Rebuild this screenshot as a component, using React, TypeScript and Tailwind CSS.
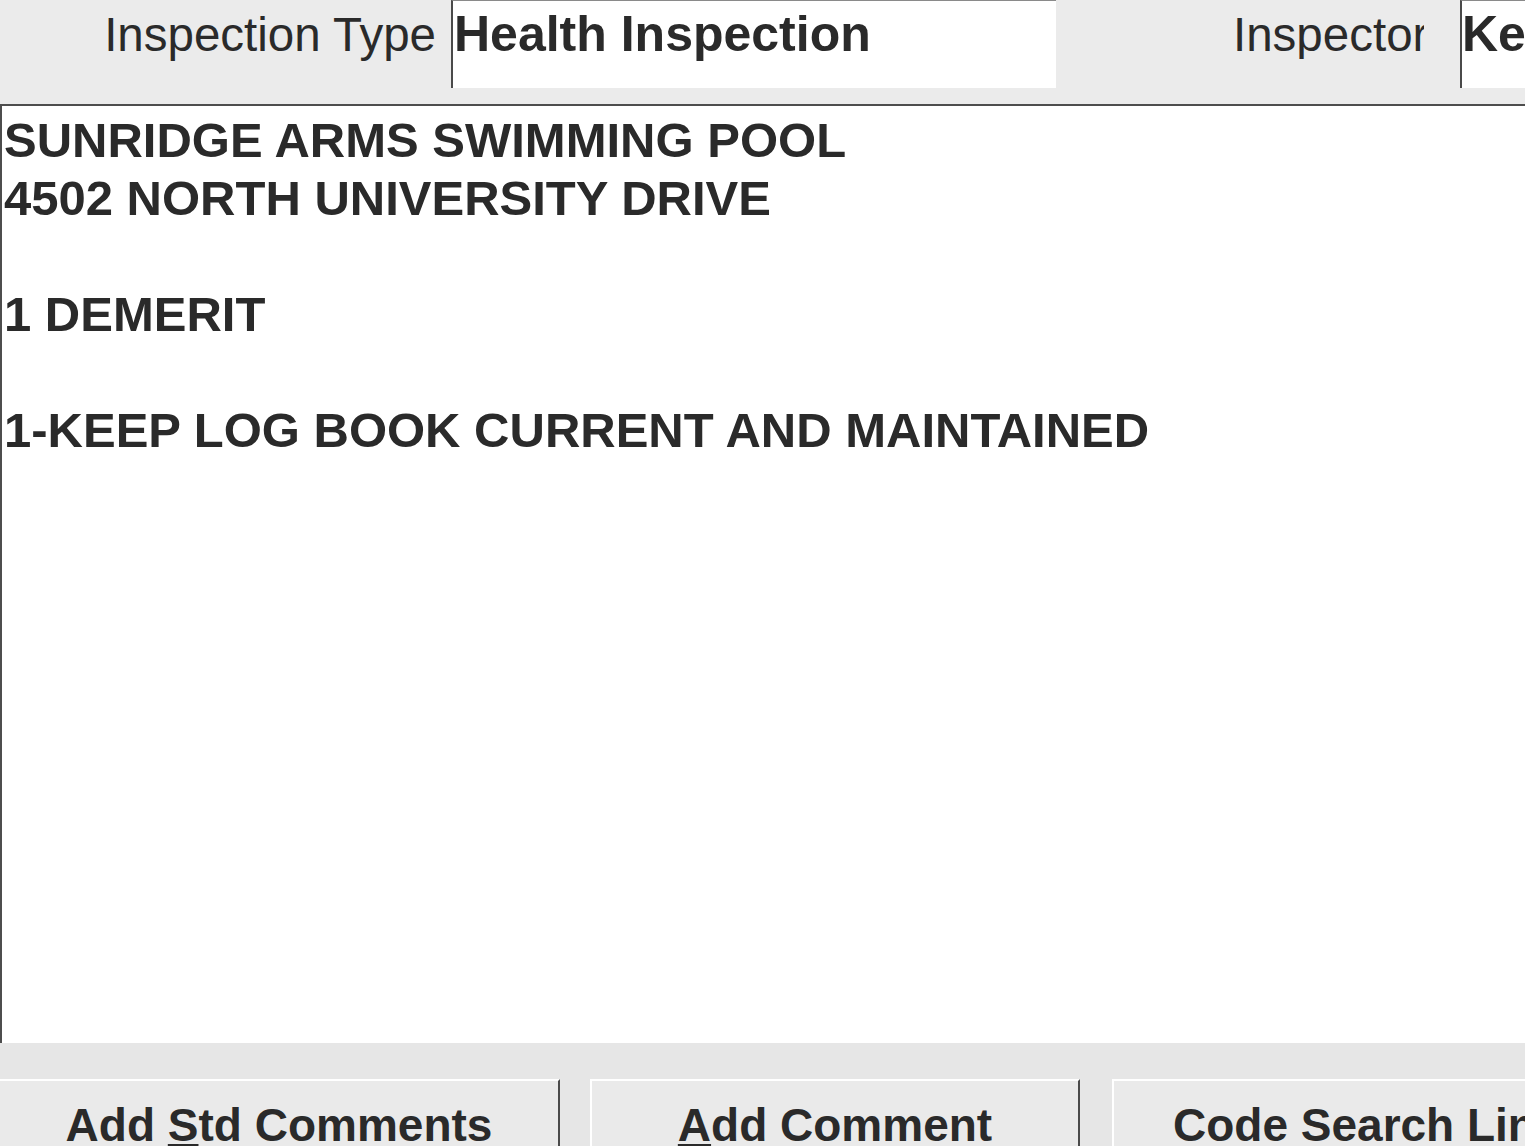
import React from "react";

const lines = [
  "SUNRIDGE ARMS SWIMMING POOL",
  "4502 NORTH UNIVERSITY DRIVE",
  "",
  "1 DEMERIT",
  "",
  "1-KEEP LOG BOOK CURRENT AND MAINTAINED",
];

function ActionButton({
  children,
  className,
}: {
  children: React.ReactNode;
  className?: string;
}) {
  return (
    <button
      type="button"
      className={
        "h-full shrink-0 border-t-2 border-t-white border-r-2 border-r-[#4a4a4a] bg-[#eaeaea] pt-[21px] text-[46px] font-bold leading-none whitespace-nowrap text-[#2a2a2a] " +
        (className ?? "")
      }
    >
      {children}
    </button>
  );
}

export default function App() {
  return (
    <div className="flex h-[1146px] w-[1525px] flex-col overflow-hidden bg-[#e6e6e6] font-['Liberation_Sans',Arial,sans-serif] text-[#2a2a2a]">
      {/* header fields */}
      <div className="flex h-[104px] shrink-0 items-start bg-[#ebebeb]">
        <div className="w-[451px] shrink-0 pr-[15px] pt-[11px] text-right text-[47.5px] leading-none whitespace-nowrap">
          Inspection Type
        </div>
        <div className="h-[88px] w-[605px] shrink-0 border-t border-l-2 border-t-[#8a8a8a] border-l-[#4a4a4a] bg-white pt-[8px] pl-[1px] text-[50px] font-bold leading-none whitespace-nowrap">
          Health Inspection
        </div>
        <div className="ml-[177px] w-[191px] shrink-0 overflow-hidden pt-[11px] text-[47.5px] leading-none whitespace-nowrap">
          Inspector
        </div>
        <div className="ml-[36px] h-[88px] flex-1 overflow-hidden border-t border-l-2 border-t-[#8a8a8a] border-l-[#4a4a4a] bg-white pt-[8px] text-[50px] font-bold leading-none whitespace-nowrap">
          Ke
        </div>
      </div>

      {/* comment text */}
      <div className="h-[939px] shrink-0 border-t-2 border-l-2 border-[#4d4d4d] bg-white pt-[5px] pl-[2px] text-[49px] font-bold leading-[58px] whitespace-nowrap">
        {lines.map((line, i) => (
          <div key={i} className="h-[58px]">
            {line}
          </div>
        ))}
      </div>

      {/* buttons */}
      <div className="flex flex-1 gap-[30px] pt-[36px]">
        <ActionButton className="w-[560px] text-center">
          Add{" "}
          <span className="underline decoration-[3px] underline-offset-[3px]">S</span>
          td Comments
        </ActionButton>
        <ActionButton className="w-[490px] border-l-2 border-l-white text-center">
          <span className="underline decoration-[3px] underline-offset-[3px]">A</span>
          dd Comment
        </ActionButton>
        <ActionButton className="ml-[2px] w-[490px] border-l-2 border-l-white pl-[59px] text-left">
          Code Search Link
        </ActionButton>
      </div>
    </div>
  );
}
